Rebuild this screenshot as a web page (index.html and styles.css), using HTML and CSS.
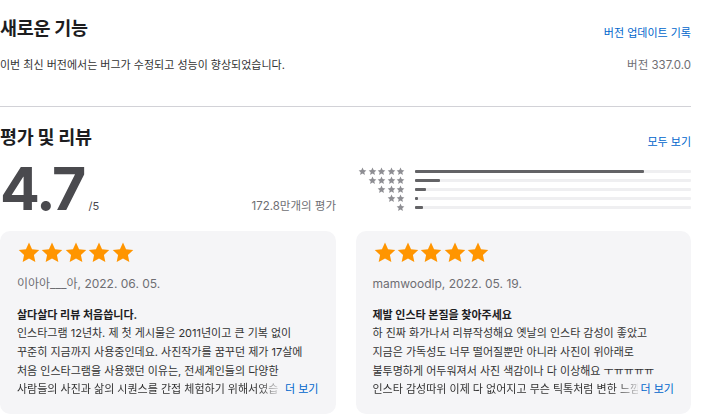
FILE: index.html
```html
<!DOCTYPE html>
<html lang="ko">
<head>
<meta charset="utf-8">
<link rel="stylesheet" href="styles.css">
</head>
<body>
<svg width="0" height="0" class="defs">
  <defs>
    <symbol id="star" viewBox="0 0 24 24"><path d="M12 1.6l3.05 6.6 7.2.85-5.33 4.95 1.42 7.12L12 17.55 5.66 21.12l1.42-7.12L1.75 9.05l7.2-.85z"/></symbol>
  </defs>
</svg>
<main class="page">
  <section class="whatsnew">
    <div class="head-row">
      <h2 class="title">새로운 기능</h2>
      <a class="link">버전 업데이트 기록</a>
    </div>
    <div class="desc-row">
      <p class="desc">이번 최신 버전에서는 버그가 수정되고 성능이 향상되었습니다.</p>
      <span class="version">버전 337.0.0</span>
    </div>
  </section>
  <hr class="sep">
  <section class="ratings">
    <div class="head-row">
      <h2 class="title">평가 및 리뷰</h2>
      <a class="link">모두 보기</a>
    </div>
    <div class="summary">
      <div class="score">
        <span class="big">4.7</span><span class="outof">/5</span>
        <span class="count">172.8만개의 평가</span>
      </div>
      <div class="hist">
        <div class="hrow"><span class="hstars"><svg><use href="#star"/></svg><svg><use href="#star"/></svg><svg><use href="#star"/></svg><svg><use href="#star"/></svg><svg><use href="#star"/></svg></span><span class="track"><span class="fill" style="width:83%"></span></span></div>
        <div class="hrow"><span class="hstars"><svg><use href="#star"/></svg><svg><use href="#star"/></svg><svg><use href="#star"/></svg><svg><use href="#star"/></svg></span><span class="track"><span class="fill" style="width:9%"></span></span></div>
        <div class="hrow"><span class="hstars"><svg><use href="#star"/></svg><svg><use href="#star"/></svg><svg><use href="#star"/></svg></span><span class="track"><span class="fill" style="width:4%"></span></span></div>
        <div class="hrow"><span class="hstars"><svg><use href="#star"/></svg><svg><use href="#star"/></svg></span><span class="track"><span class="fill" style="width:1%"></span></span></div>
        <div class="hrow"><span class="hstars"><svg><use href="#star"/></svg></span><span class="track"><span class="fill" style="width:3%"></span></span></div>
      </div>
    </div>
    <div class="cards">
      <article class="card">
        <div class="stars"><svg><use href="#star"/></svg><svg><use href="#star"/></svg><svg><use href="#star"/></svg><svg><use href="#star"/></svg><svg><use href="#star"/></svg></div>
        <p class="author">이아아___아, 2022. 06. 05.</p>
        <h3 class="rtitle">살다살다 리뷰 처음씁니다.</h3>
        <div class="body">
          <p>인스타그램 12년차. 제 첫 게시물은 2011년이고 큰 기복 없이</p>
          <p>꾸준히 지금까지 사용중인데요. 사진작가를 꿈꾸던 제가 17살에</p>
          <p>처음 인스타그램을 사용했던 이유는, 전세계인들의 다양한</p>
          <p class="last"><span class="clip">사람들의 사진과 삶의 시퀀스를 간접 체험하기 위해서였습</span><span class="more">더 보기</span></p>
        </div>
      </article>
      <article class="card">
        <div class="stars"><svg><use href="#star"/></svg><svg><use href="#star"/></svg><svg><use href="#star"/></svg><svg><use href="#star"/></svg><svg><use href="#star"/></svg></div>
        <p class="author">mamwoodlp, 2022. 05. 19.</p>
        <h3 class="rtitle">제발 인스타 본질을 찾아주세요</h3>
        <div class="body">
          <p>하 진짜 화가나서 리뷰작성해요 옛날의 인스타 감성이 좋았고</p>
          <p>지금은 가독성도 너무 떨어질뿐만 아니라 사진이 위아래로</p>
          <p>불투명하게 어두워져서 사진 색감이나 다 이상해요 ㅜㅠㅠㅠㅠ</p>
          <p class="last"><span class="clip">인스타 감성따위 이제 다 없어지고 무슨 틱톡처럼 변한 느낌</span><span class="more">더 보기</span></p>
        </div>
      </article>
    </div>
  </section>
</main>
</body>
</html>
```

FILE: styles.css
```css
* { box-sizing: border-box; }
html, body { margin: 0; padding: 0; background: #fff; }
body {
  font-family: "Inter", "Noto Sans CJK KR", sans-serif;
  color: #1d1d1f;
  font-size: 11px;
}
.defs { position: absolute; }
.page { width: 691px; }
p, h2, h3 { margin: 0; }

.head-row {
  display: flex;
  justify-content: space-between;
  align-items: flex-end;
}
.title {
  font-size: 18.5px;
  font-weight: 700;
  letter-spacing: -0.3px;
  line-height: 24px;
}
.link {
  color: #0066cc;
  font-size: 11px;
  line-height: 18px;
  position: relative;
  top: 2px;
}
.whatsnew { padding-top: 16px; }
.desc-row {
  display: flex;
  justify-content: space-between;
  margin-top: 16px;
  line-height: 18px;
  color: #333;
}
.version { color: #6e6e73; font-size: 11.5px; }
.sep {
  margin: 32px 0 0;
  border: 0;
  border-top: 1px solid #d2d2d7;
}
.ratings { padding-top: 18px; }

.summary {
  display: flex;
  gap: 21px;
  margin-top: 10px;
  height: 72px;
}
.score {
  width: 336px;
  display: flex;
  align-items: baseline;
  height: 60px;
}
.big {
  font-size: 59px;
  font-weight: 700;
  color: #4a4a4e;
  letter-spacing: -2px;
  line-height: 60px;
}
.outof {
  margin-left: 4px;
  font-size: 11px;
  color: #4a4a4e;
}
.count {
  margin-left: auto;
  color: #6e6e73;
  font-size: 11.5px;
}
.hist {
  flex: 1;
  display: flex;
  flex-direction: column;
  padding-top: 8px;
}
.hrow {
  display: flex;
  align-items: center;
  height: 9px;
}
.hstars {
  width: 48px;
  display: flex;
  justify-content: flex-end;
  gap: 0.5px;
}
.hstars svg {
  width: 9px;
  height: 9px;
  fill: #8e8e93;
}
.track {
  flex: 1;
  margin-left: 10px;
  height: 3px;
  background: #efeff1;
  border-radius: 1px;
  display: flex;
}
.fill {
  height: 3px;
  background: #636366;
  border-radius: 1px;
}

.cards {
  display: flex;
  gap: 20px;
}
.card {
  flex: 1;
  min-width: 0;
  background: #f5f5f7;
  border-radius: 10px;
  padding: 10px 17px 0;
  height: 183px;
}
.stars { display: flex; gap: 0; }
.stars svg {
  width: 24px;
  height: 24px;
  fill: #ff9500;
  margin-right: -0.6px;
}
.author {
  margin-top: 10px;
  color: #6e6e73;
  font-size: 12px;
  line-height: 18px;
}
.rtitle {
  margin-top: 13px;
  font-size: 11px;
  font-weight: 700;
  line-height: 18px;
}
.body p {
  line-height: 18.8px;
  white-space: nowrap;
  color: #333;
}
.body .last {
  display: flex;
}
.clip {
  flex: 0 1 auto;
  min-width: 0;
  white-space: nowrap;
  -webkit-mask-image: linear-gradient(to right, #000 calc(100% - 20px), rgba(0,0,0,0.2));
  mask-image: linear-gradient(to right, #000 calc(100% - 20px), rgba(0,0,0,0.2));
}
.more {
  flex: none;
  margin-left: auto;
  padding-left: 3px;
  color: #0066cc;
}
```
